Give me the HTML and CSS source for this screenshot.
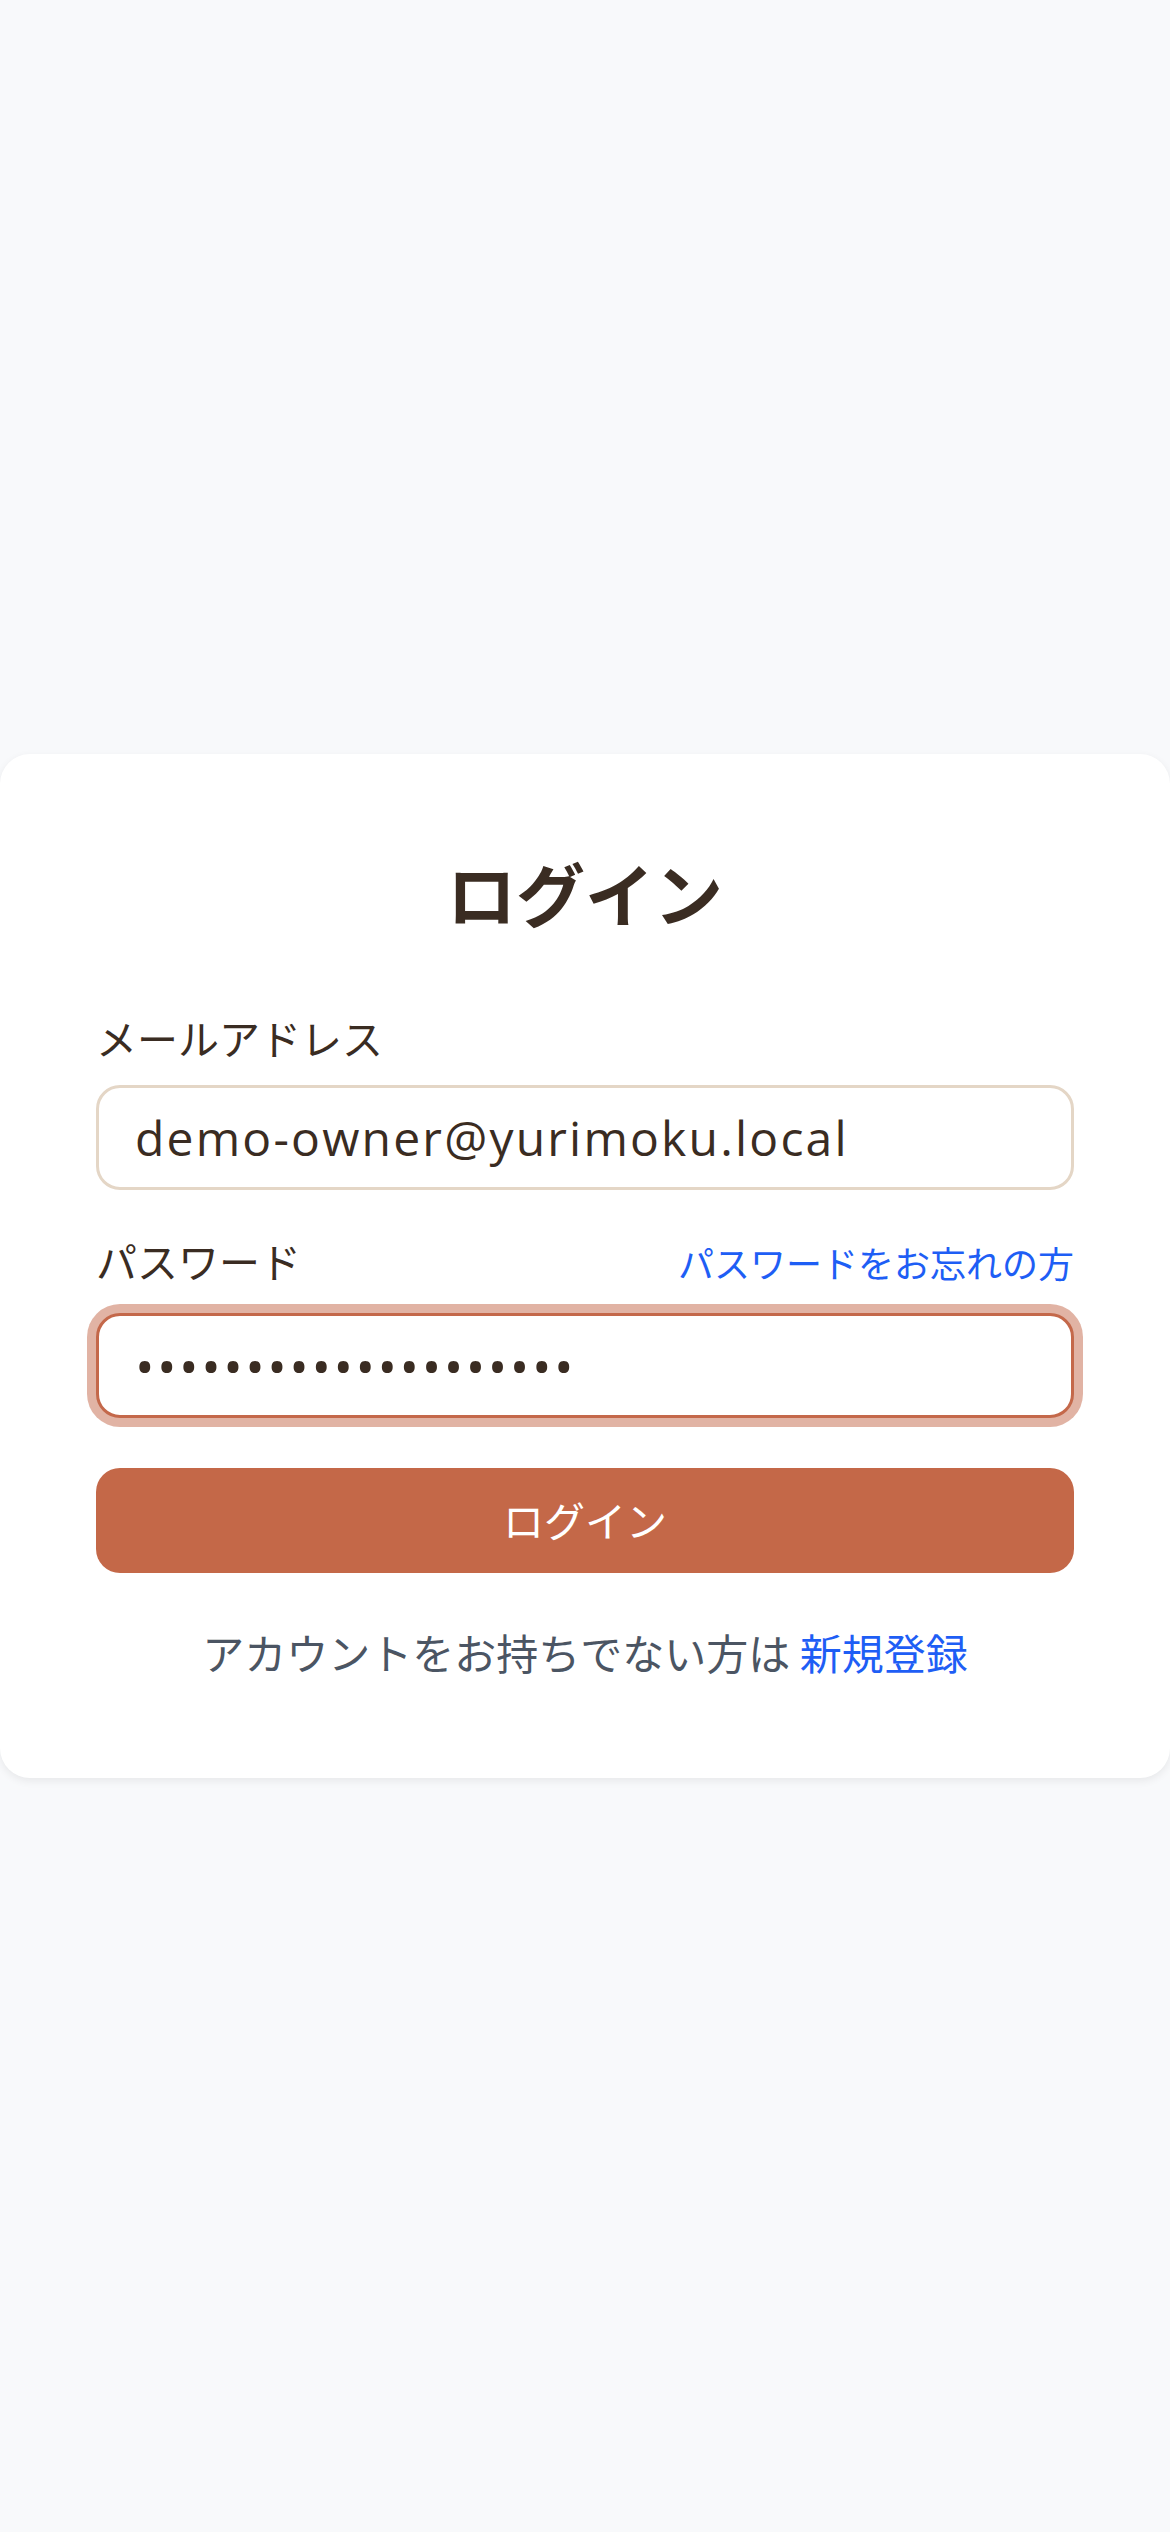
FILE: index.html
```html
<!DOCTYPE html>
<html lang="ja">
<head>
<meta charset="utf-8">
<title>ログイン</title>
<link rel="stylesheet" href="styles.css">
</head>
<body>
<main class="page">
  <section class="card">
    <h1 class="title">ログイン</h1>
    <form class="form">
      <div class="field">
        <label class="label" for="email">メールアドレス</label>
        <input id="email" class="input" type="text" value="demo-owner@yurimoku.local">
      </div>
      <div class="field field-pw">
        <div class="label-row">
          <label class="label" for="pw">パスワード</label>
          <a class="forgot" href="#">パスワードをお忘れの方</a>
        </div>
        <input id="pw" class="input input-focus" type="password" value="demopassword12345678">
      </div>
      <button class="button" type="button">ログイン</button>
    </form>
    <p class="footer">アカウントをお持ちでない方は <a class="signup" href="#">新規登録</a></p>
  </section>
</main>
</body>
</html>
```
FILE: styles.css
```css
html, body {
  margin: 0;
  padding: 0;
}
body {
  background: #f8f9fb;
  font-family: "Open Sans", "Noto Sans CJK JP", sans-serif;
  color: #3a2c22;
}
.page {
  min-height: 2532px;
  display: flex;
  align-items: center;
  justify-content: center;
}
.card {
  width: 100%;
  box-sizing: border-box;
  background: #ffffff;
  border-radius: 30px;
  padding: 90px 96px 96px;
  box-shadow: 0 3px 8px rgba(0, 0, 0, 0.07);
}
.title {
  margin: 0 0 67px;
  text-align: center;
  font-size: 69px;
  line-height: 96px;
  font-weight: 700;
  color: #3a2c22;
  font-family: "Noto Sans CJK JP", sans-serif;
}
.form {
  display: flex;
  flex-direction: column;
}
.field {
  display: flex;
  flex-direction: column;
}
.field-pw {
  margin-top: 42px;
}
.label-row {
  display: flex;
  justify-content: space-between;
  align-items: center;
  margin-bottom: 21px;
}
.label {
  font-family: "Noto Sans CJK JP", sans-serif;
  font-size: 41px;
  line-height: 60px;
  color: #3a2c22;
  margin-bottom: 18px;
}
.label-row .label {
  margin-bottom: 0;
  position: relative;
  top: -2px;
}
.forgot {
  font-family: "Noto Sans CJK JP", sans-serif;
  font-size: 36px;
  line-height: 60px;
  color: #1e5ef5;
  text-decoration: none;
}
.input {
  box-sizing: border-box;
  width: 100%;
  height: 105px;
  margin: 0;
  border: 3px solid #e4d6c6;
  border-radius: 24px;
  padding: 0 36px;
  font-family: "Open Sans", sans-serif;
  font-size: 48px;
  letter-spacing: 2.2px;
  color: #3a2c22;
  background: #ffffff;
  outline: none;
}
.input-focus {
  border-color: #c4684a;
  box-shadow: 0 0 0 9px rgba(196, 104, 74, 0.5);
  font-size: 52px;
  letter-spacing: 2.5px;
}
.button {
  margin-top: 50px;
  height: 105px;
  border: none;
  border-radius: 24px;
  background: #c46848;
  color: #ffffff;
  font-family: "Noto Sans CJK JP", sans-serif;
  font-size: 41px;
  padding: 0 0 4px;
}
.footer {
  margin: 49px 0 0;
  text-align: center;
  font-family: "Noto Sans CJK JP", sans-serif;
  font-size: 42px;
  line-height: 60px;
  color: #4b5563;
}
.signup {
  color: #1e5ef5;
  text-decoration: none;
}
```
